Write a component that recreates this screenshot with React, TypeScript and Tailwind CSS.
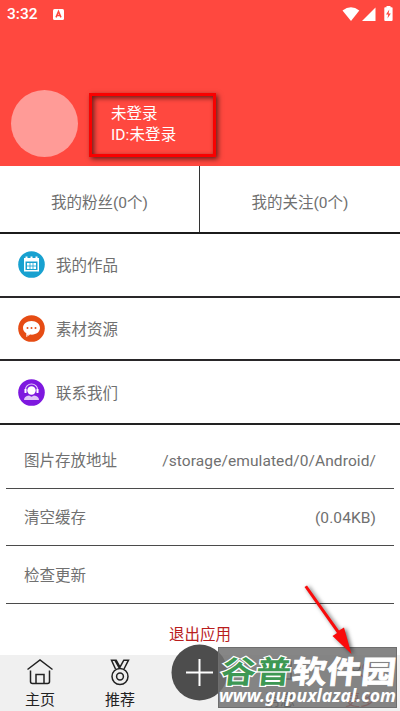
import React from "react";

function StatusBar() {
  return (
    <div className="flex h-7 items-center pl-[7px] pr-[5px] text-white">
      <span className="w-[46px] text-[15.5px] leading-7 font-medium">3:32</span>
      <svg className="h-[11px] w-[11px]" viewBox="0 0 11 11">
        <rect width="11" height="11" rx="1.5" fill="#fff" />
        <path d="M3 8.4 5.5 2.4 8 8.4M4 6.5h3" fill="none" stroke="#ff483f" strokeWidth="1.5" />
      </svg>
      <div className="flex-1" />
      <svg className="h-[18px] w-[54px]" viewBox="341 4 54 18" fill="#fff">
        <path d="M342.5 9.6Q351 2.8 359.3 9.6L351 20Z" />
        <path d="M362 20 375.5 6.5V20Z" />
        <path d="M386.500 5h4v1.2h1.2q.9 0 .9.9V19q0 1-1 1h-6.300q-1 0-1-1V7.100q0-.9.9-.9h1.300Z" />
        <path d="M389.300 8.600 386 13.600h2.200l-.7 4 3.300-5h-2.200Z" fill="#ff483f" />
      </svg>
    </div>
  );
}

function Header() {
  return (
    <header className="h-[166px] shrink-0 bg-[#ff483f]">
      <StatusBar />
      <div className="flex pt-[62px] pl-[11px]">
        <div className="h-[67px] w-[67px] rounded-full bg-[#ff9b97]" />
        <div className="mt-[3px] ml-[11px] h-[64px] w-[127px] border-[3px] border-[#f90000] pt-[7px] pl-[19px] text-[15.500px] leading-[22px] text-white shadow-[2px_2px_5px_#0009,inset_2px_2px_5px_#0009]">
          <div>未登录</div>
          <div className="-mt-px tracking-[0.1px]">ID:未登录</div>
        </div>
      </div>
    </header>
  );
}

function MenuRow({ label, last, children }: { label: string; last?: boolean; children: React.ReactNode }) {
  return (
    <div className={`flex shrink-0 items-center border-b-2 pl-[18px] ${last ? "h-[64px] border-[#222]" : "h-[63.500px] border-[#292729]"}`}>
      <svg className="h-[27px] w-[27px]" viewBox="0 0 27 27">{children}</svg>
      <span className="ml-[11px] pt-[3px] leading-[24px]">{label}</span>
    </div>
  );
}

function SettingRow({ label, value }: { label: string; value?: string }) {
  return (
    <div className="mx-[6px] flex h-[57.700px] shrink-0 items-center justify-between border-b border-[#4b4b4b] px-[18px] pt-[4px]">
      <span>{label}</span>
      <span className="tracking-[0.090px]">{value}</span>
    </div>
  );
}

function NavItem({ label, red, children }: { label: string; red?: boolean; children?: React.ReactNode }) {
  return (
    <div className={`flex w-[80px] flex-col items-center pt-[3px] text-[15px] leading-[24px] ${red ? "text-[#cf2525]" : "text-[#222]"}`}>
      <svg className="h-[28px] w-[28px] shrink-0" viewBox="0 0 28 28" fill="none" stroke="currentColor" strokeWidth="1.500">{children}</svg>
      <span className="pt-[2px]">{label}</span>
    </div>
  );
}

function BottomNav() {
  return (
    <nav className="relative flex h-[56px] shrink-0 bg-[#f0f0f0]">
      <NavItem label="主页">
        <path d="M1.500 11.500 14 2l12.500 9.500M4.500 12.500v11q0 2 2 2h15q2 0 2-2v-11M10 25.500v-9h8v9" />
      </NavItem>
      <NavItem label="推荐">
        <circle cx="14" cy="18.500" r="8" />
        <circle cx="14" cy="18.500" r="3.400" />
        <path d="M9.500 11 5.500 2.200h4.700l3.800 7 3.800-7h4.700L18 11M9 2.500l4.500 8" />
      </NavItem>
      <div className="w-[80px]" />
      <NavItem label="消息">
        <path d="M3 4h22v17H14l-5 4v-4H3Z" />
      </NavItem>
      <NavItem label="更多" red>
        <circle cx="10" cy="9" r="4" stroke="#222" />
        <circle cx="21" cy="9" r="4" />
        <path d="M10 17q5-3 10 6" />
      </NavItem>
      <svg className="absolute -top-[11px] left-[171px] h-[57px] w-[57px]" viewBox="0 0 57 57">
        <circle cx="28.500" cy="28.500" r="28" fill="#4d4d4d" />
        <path d="M15 28.500h27M28.500 15v27" stroke="#fff" strokeWidth="2" />
      </svg>
    </nav>
  );
}

function Watermark() {
  return (
    <div className="absolute top-[647px] left-[218px] h-[61px] w-[179px] border border-[#6e6e6e] bg-[#717171d9]">
      <svg className="h-full w-full overflow-visible" viewBox="219 648 177 59">
        <g transform="translate(219 683) skewX(-6)" fontFamily="'Noto Sans CJK SC', sans-serif" fontWeight="700" fontSize="31">
          <text x="1" y="0" textLength="70" lengthAdjust="spacingAndGlyphs" fill="#3d9853" stroke="#fff" strokeWidth="2.400" paintOrder="stroke">谷普</text>
          <text x="72" y="0" textLength="104" lengthAdjust="spacingAndGlyphs" fill="#fff" stroke="#fff" strokeWidth=".8">软件园</text>
        </g>
        <text x="219" y="702" textLength="177" lengthAdjust="spacingAndGlyphs" fill="#fff" fontFamily="'Noto Sans', sans-serif" fontWeight="700" fontStyle="italic" fontSize="17">www.gupuxlazal.com</text>
      </svg>
    </div>
  );
}

export default function App() {
  return (
    <div className="relative flex h-[711px] w-[400px] flex-col overflow-hidden bg-white font-['Roboto','Noto_Sans_CJK_SC',sans-serif] text-[15.500px] text-[#707070]">
      <Header />
      <div className="flex h-[68px] shrink-0 border-b-2 border-[#1b1b1b] text-center leading-[75px]">
        <div className="w-[200px] border-r border-[#333]">我的粉丝(0个)</div>
        <div className="w-[200px]">我的关注(0个)</div>
      </div>
      <MenuRow label="我的作品">
        <circle cx="13.500" cy="13.500" r="13.300" fill="#18a1d0" />
        <path d="M6 7h1.500V5.500h2V7h3V5.500h2V7h3V5.500h2V7H21v13.500H6Z" fill="#fff" />
        <path d="M7.500 10.500h12V19h-12Z" fill="#18a1d0" />
        <path d="M9 12h9v6H9Z" fill="#fff" />
        <path d="M12 12v6M15 12v6M9 15h9" stroke="#18a1d0" strokeWidth=".8" />
      </MenuRow>
      <MenuRow label="素材资源">
        <circle cx="13.500" cy="13.500" r="13.300" fill="#e64c14" />
        <path d="M13.500 6C8.500 6 5 9 5 12.800c0 2.300 1.300 4.200 3.300 5.500V22l4-2.400c5.500.6 9.700-2.400 9.700-6.800C22 9 18.500 6 13.500 6Z" fill="#fff" />
        <path d="M8.700 20v1.600l3.500-2Z" fill="#f2ae96" />
        <g fill="#e64c14"><circle cx="9.500" cy="13" r="1" /><circle cx="13.500" cy="13" r="1" /><circle cx="17.500" cy="13" r="1" /></g>
      </MenuRow>
      <MenuRow label="联系我们" last>
        <circle cx="13.500" cy="13.500" r="13.300" fill="#7e18df" />
        <circle cx="13.500" cy="11.500" r="4.200" fill="#fff" />
        <path d="M7.500 12.500v-2a6 5.500 0 0 1 12 0v2" fill="none" stroke="#e5d1f9" strokeWidth="1.200" />
        <path d="M7.500 10v4M19.500 10v4" stroke="#fff" strokeWidth="2" />
        <path d="M6 21q0-4 5-4.500l2.500 1.300 2.500-1.300q5 .5 5 4.500Z" fill="#dfc5f8" />
      </MenuRow>
      <div className="flex shrink-0 flex-col pt-[6px]">
        <SettingRow label="图片存放地址" value="/storage/emulated/0/Android/" />
        <SettingRow label="清空缓存" value="(0.04KB)" />
        <SettingRow label="检查更新" />
      </div>
      <div className="min-h-0 flex-1 pt-[19px] text-center leading-[24px] text-[#b91d1d]">退出应用</div>
      <BottomNav />
      <Watermark />
      <svg className="absolute top-[580px] left-[295px] h-[80px] w-[65px] overflow-visible drop-shadow-[2px_1px_2px_#0009]" viewBox="295 580 65 80">
        <path d="M304.500 587 307 585.500 339 630.500 344 627.500 351.500 654 332.500 636 337 633Z" fill="#f90b0b" />
      </svg>
    </div>
  );
}
